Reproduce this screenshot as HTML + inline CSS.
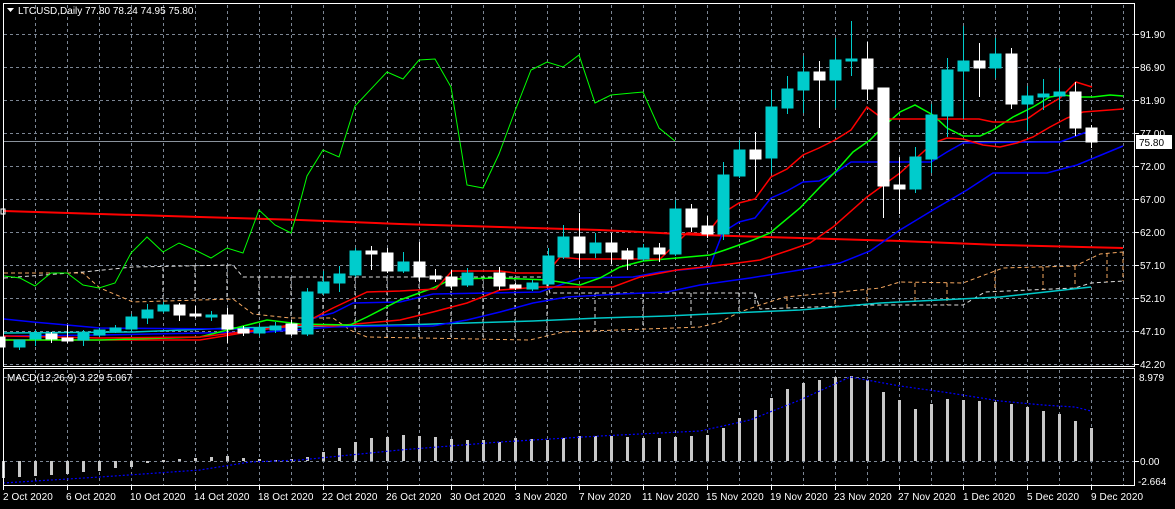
<!DOCTYPE html>
<html><head><meta charset="utf-8"><style>
html,body{margin:0;padding:0;background:#000;width:1175px;height:509px;overflow:hidden}
svg{display:block}
text{font-family:"Liberation Sans",sans-serif;font-size:10px;fill:#fff}
.d text{letter-spacing:0.1px}
</style></head><body>
<svg width="1175" height="509" viewBox="0 0 1175 509" xmlns="http://www.w3.org/2000/svg">
<rect width="1175" height="509" fill="#000"/>
<g stroke="#7c8694" stroke-width="1" stroke-dasharray="3,3" shape-rendering="crispEdges">
<path d="M4 34.5H1134M4 67.5H1134M4 100.5H1134M4 133.5H1134M4 166.5H1134M4 199.5H1134M4 232.5H1134M4 265.5H1134M4 298.5H1134M4 331.5H1134M4 364.5H1134M4 377.5H1134M4 461.5H1134"/>
<path d="M35.5 5V366M67.5 5V366M99.5 5V366M131.5 5V366M163.5 5V366M195.5 5V366M227.5 5V366M259.5 5V366M291.5 5V366M323.5 5V366M355.5 5V366M387.5 5V366M419.5 5V366M451.5 5V366M483.5 5V366M515.5 5V366M547.5 5V366M579.5 5V366M611.5 5V366M643.5 5V366M675.5 5V366M707.5 5V366M739.5 5V366M771.5 5V366M803.5 5V366M835.5 5V366M867.5 5V366M899.5 5V366M931.5 5V366M963.5 5V366M995.5 5V366M1027.5 5V366M1059.5 5V366M1091.5 5V366M1123.5 5V366"/>
<path d="M35.5 370V485M67.5 370V485M99.5 370V485M131.5 370V485M163.5 370V485M195.5 370V485M227.5 370V485M259.5 370V485M291.5 370V485M323.5 370V485M355.5 370V485M387.5 370V485M419.5 370V485M451.5 370V485M483.5 370V485M515.5 370V485M547.5 370V485M579.5 370V485M611.5 370V485M643.5 370V485M675.5 370V485M707.5 370V485M739.5 370V485M771.5 370V485M803.5 370V485M835.5 370V485M867.5 370V485M899.5 370V485M931.5 370V485M963.5 370V485M995.5 370V485M1027.5 370V485M1059.5 370V485M1091.5 370V485M1123.5 370V485"/>
</g>
<g fill="none" stroke-width="1" stroke-dasharray="4,3">
<polyline stroke="#ddd" points="4,278 83,272 133,267 233,265 243,277 545,277 550,293 755,293 760,309 870,305 963,305 985,292 1075,288 1091,283 1123,281"/>
<polyline stroke="#f5a860" points="4,273 83,273 100,288 133,302 233,299 253,314 290,318 333,318 350,330 367,337 530,340 563,332 700,327 720,322 740,312 760,305 785,297 830,293 880,288 900,282 963,283 1003,268 1075,266 1100,254 1123,252"/>
<path stroke="#ddd" d="M163 267V300M195 266V300M227 265V300M259 277V315M291 277V318M323 277V318M355 277V332M387 277V337M419 277V340M451 277V340M483 277V340M515 277V340M547 277V336M595 293V331M643 293V329M691 293V327M739 293V312M755 293V306"/>
<path stroke="#f5a860" d="M787 297V308M835 293V307M867 290V305M915 283V305M947 283V305M995 270V292M1043 267V290M1075 266V288M1107 253V282M1123 252V281"/>
</g>
<polyline fill="none" stroke="#f00" stroke-width="2" points="4,211 100,214 200,217 300,220 400,224 500,227 600,230 700,235 800,238 900,241 1000,245 1123,248"/>
<polyline fill="none" stroke="#0f0" stroke-width="1" points="4,276 20,278 35,286 51,273 67,273 83,285 99,288 115,283 131,253 147,237 163,252 179,243 195,250 211,258 227,248 243,253 259,210 275,225 291,233 298,210 307,176 323,150 339,157 355,106 387,72 403,79 419,60 435,59 451,87 467,185 483,188 499,154 515,111 531,70 547,62 563,67 579,55 595,103 611,95 643,92 659,128 675,141"/>
<line x1="4" y1="141.5" x2="1134" y2="141.5" stroke="#8a929c" stroke-width="1"/>
<g fill="none" stroke-width="1.5">
<polyline stroke="#00c8c8" points="4,333 133,332 233,328 333,326 400,325 467,323 533,321 600,318 667,316 730,313 800,310 880,303 1000,297 1091,287"/>
<polyline stroke="#00f" points="4,336 100,335 200,333 267,332 333,327 400,326 433,326 467,320 500,312 533,303 567,297 620,294 667,292 700,285 750,278 800,270 840,263 870,251 900,230 933,210 967,190 993,173 1047,173 1077,165 1123,146"/>
<polyline stroke="#00f" points="4,319 33,322 67,325 100,328 233,329 290,329 317,317 333,313 353,303 400,302 433,294 540,292 560,285 580,278 633,277 660,272 710,267 716,250 723,232 739,222 755,218 771,198 787,191 803,182 819,181 835,173 851,162 931,162 947,152 963,143 1038,142 1060,142 1092,130"/>
<polyline stroke="#f00" points="4,340 200,340 290,325 333,326 400,320 433,312 467,303 500,290 540,287 613,287 640,277 677,270 730,264 760,260 790,250 810,243 833,227 867,197 900,173 933,143 947,138 963,139 983,145 1000,147 1017,143 1033,137 1050,127 1067,118 1083,112 1123,109"/>
<polyline stroke="#0f0" points="4,340 100,340 200,337 267,320 300,324 350,325 367,317 400,300 433,288 452,279 500,278 547,280 580,285 600,278 620,267 643,261 677,258 710,255 725,250 753,240 770,233 800,208 820,187 837,170 853,152 870,140 883,127 900,112 915,105 933,115 947,128 963,136 980,136 993,130 1013,117 1033,107 1050,97 1063,95 1080,97 1093,97 1110,95 1123,96"/>
<polyline stroke="#f00" points="4,336 100,338 200,337 300,325 333,308 367,292 400,291 436,289 452,271 500,271 515,273 547,273 560,257 580,259 660,259 687,233 707,234 723,213 739,203 755,199 771,177 787,169 803,155 819,148 835,140 851,130 867,107 883,119 979,119 993,122 1013,122 1027,119 1043,108 1060,98 1076,82 1092,87"/>
</g>
<g stroke-width="1" shape-rendering="crispEdges">
<g stroke="#00cccc" fill="#00cccc">
<path d="M19.5 340V350M35.5 330V346M83.5 330V346M99.5 328V337M115.5 325V333M131.5 314V331M147.5 304V324M163.5 302V313M211.5 311V321M259.5 325V336M275.5 322V333M307.5 288V336M323.5 271V295M339.5 266V292M355.5 248V277M403.5 252V273M467.5 268V287M532.5 280V291M548.5 248V286M563.5 225V259M595.5 233V258M643.5 244V261M675.5 200V256M723.5 162V240M739.5 140V178M771.5 90V173M787.5 76V114M803.5 56V113M835.5 38V108M851.5 21V76M915.5 147V193M931.5 104V173M947.5 58V137M963.5 26V119M995.5 38V78M1027.5 86V131M1043.5 79V110M1059.5 68V110"/>
<rect x="14" y="340" width="11" height="7"/><rect x="30" y="334" width="11" height="5"/><rect x="78" y="333" width="11" height="7"/><rect x="94" y="330" width="11" height="5"/><rect x="110" y="328" width="11" height="3"/><rect x="126" y="317" width="11" height="12"/><rect x="142" y="310" width="11" height="8"/><rect x="158" y="305" width="11" height="6"/><rect x="206" y="315" width="11" height="2"/><rect x="254" y="328" width="11" height="5"/><rect x="270" y="326" width="11" height="4"/><rect x="302" y="292" width="11" height="42"/><rect x="318" y="282" width="11" height="11"/><rect x="334" y="274" width="11" height="9"/><rect x="350" y="251" width="11" height="24"/><rect x="398" y="262" width="11" height="9"/><rect x="462" y="273" width="11" height="12"/><rect x="527" y="283" width="11" height="6"/><rect x="543" y="256" width="11" height="28"/><rect x="558" y="237" width="11" height="20"/><rect x="590" y="243" width="11" height="10"/><rect x="638" y="248" width="11" height="11"/><rect x="670" y="209" width="11" height="45"/><rect x="718" y="175" width="11" height="59"/><rect x="734" y="150" width="11" height="26"/><rect x="766" y="107" width="11" height="51"/><rect x="782" y="89" width="11" height="19"/><rect x="798" y="72" width="11" height="18"/><rect x="830" y="60" width="11" height="20"/><rect x="846" y="59" width="11" height="2"/><rect x="910" y="157" width="11" height="32"/><rect x="926" y="115" width="11" height="44"/><rect x="942" y="70" width="11" height="46"/><rect x="958" y="61" width="11" height="10"/><rect x="990" y="54" width="11" height="14"/><rect x="1022" y="96" width="11" height="8"/><rect x="1038" y="94" width="11" height="3"/><rect x="1054" y="92" width="11" height="4"/>
</g>
<g stroke="#fff" fill="#fff">
<path d="M51.5 332V343M67.5 325V343M179.5 303V321M195.5 306V318M227.5 308V343M243.5 326V336M291.5 320V336M371.5 246V270M387.5 248V273M419.5 242V282M435.5 269V282M451.5 270V290M499.5 267V290M515.5 283V290M579.5 213V268M611.5 233V264M627.5 248V270M659.5 243V262M691.5 204V232M707.5 216V238M755.5 132V192M819.5 61V128M867.5 42V100M883.5 88V218M899.5 157V214M979.5 43V97M1011.5 48V109M1075.5 82V136M1091.5 125V148"/>
<rect x="46" y="334" width="11" height="5"/><rect x="62" y="338" width="11" height="3"/><rect x="174" y="305" width="11" height="10"/><rect x="190" y="314" width="11" height="2"/><rect x="222" y="315" width="11" height="14"/><rect x="238" y="329" width="11" height="4"/><rect x="286" y="324" width="11" height="10"/><rect x="366" y="251" width="11" height="3"/><rect x="382" y="253" width="11" height="18"/><rect x="414" y="262" width="11" height="15"/><rect x="430" y="276" width="11" height="3"/><rect x="446" y="277" width="11" height="9"/><rect x="494" y="273" width="11" height="13"/><rect x="510" y="285" width="11" height="3"/><rect x="574" y="237" width="11" height="16"/><rect x="606" y="243" width="11" height="9"/><rect x="622" y="251" width="11" height="8"/><rect x="654" y="248" width="11" height="6"/><rect x="686" y="209" width="11" height="18"/><rect x="702" y="226" width="11" height="8"/><rect x="750" y="150" width="11" height="9"/><rect x="814" y="72" width="11" height="8"/><rect x="862" y="59" width="11" height="30"/><rect x="878" y="88" width="11" height="98"/><rect x="894" y="185" width="11" height="4"/><rect x="974" y="61" width="11" height="7"/><rect x="1006" y="54" width="11" height="50"/><rect x="1070" y="92" width="11" height="36"/><rect x="1086" y="128" width="11" height="14"/>
<rect x="0" y="337" width="5" height="10"/>
</g>
</g>
<g stroke="#c8c8c8" stroke-width="3" shape-rendering="crispEdges">
<path d="M3.5 461V478M19.5 461V477M35.5 461V476M51.5 461V475M67.5 461V474M83.5 461V472M99.5 461V471M115.5 461V468M131.5 461V467M147.5 461V463M163.5 460V462M179.5 459V461M195.5 458V461M211.5 457V461M227.5 456V461M243.5 458V461M259.5 459V461M275.5 460V461M291.5 459V461M307.5 457V461M323.5 452V461M339.5 448V461M355.5 442V461M371.5 438V461M387.5 437V461M403.5 435V461M419.5 436V461M435.5 437V461M451.5 439V461M467.5 440V461M483.5 440V461M499.5 442V461M515.5 438V461M531.5 439V461M547.5 440V461M563.5 438V461M579.5 436V461M595.5 436V461M611.5 436V461M627.5 437V461M643.5 438V461M659.5 438V461M675.5 437V461M691.5 436V461M707.5 435V461M723.5 428V461M739.5 418V461M755.5 410V461M771.5 398V461M787.5 389V461M803.5 383V461M819.5 380V461M835.5 377V461M851.5 376V461M867.5 380V461M883.5 392V461M899.5 400V461M915.5 409V461M931.5 404V461M947.5 399V461M963.5 400V461M979.5 401V461M995.5 402V461M1011.5 404V461M1027.5 407V461M1043.5 411V461M1059.5 414V461M1075.5 421V461M1091.5 428V461"/>
</g>
<polyline fill="none" stroke="#0000ff" stroke-width="1.2" stroke-dasharray="2,2" points="3,483 100,477 200,470 250,462 300,460 350,455 400,450 450,446 500,442 600,436 700,431 750,420 800,400 850,377 900,386 950,393 1000,401 1043,405 1075,407 1091,411"/>
<g fill="none" stroke="#fff" stroke-width="1" shape-rendering="crispEdges">
<rect x="3.5" y="3.5" width="1131" height="363"/>
<rect x="3.5" y="368.5" width="1131" height="117"/>
</g>
<g stroke="#fff" shape-rendering="crispEdges">
<path d="M3.5 486V490M67.5 486V490M131.5 486V490M195.5 486V490M259.5 486V490M323.5 486V490M387.5 486V490M451.5 486V490M515.5 486V490M579.5 486V490M643.5 486V490M707.5 486V490M771.5 486V490M835.5 486V490M899.5 486V490M963.5 486V490M1027.5 486V490M1091.5 486V490"/>
<path d="M1135 34.5H1139M1135 67.5H1139M1135 100.5H1139M1135 133.5H1139M1135 166.5H1139M1135 199.5H1139M1135 232.5H1139M1135 265.5H1139M1135 298.5H1139M1135 331.5H1139M1135 364.5H1139M1135 461.5H1139"/>
</g>
<rect x="1" y="209" width="4" height="5" fill="none" stroke="#fff" stroke-width="1"/>
<path d="M7 8H14L10.5 12Z" fill="#fff"/>
<text x="18" y="14">LTCUSD,Daily  77.80 78.24 74.95 75.80</text>
<text x="7" y="381">MACD(12,26,9) 3.229 5.067</text>
<g>
<text x="1140" y="38">91.90</text><text x="1140" y="71">86.90</text><text x="1140" y="104">81.90</text><text x="1140" y="137">77.00</text><text x="1140" y="170">72.00</text><text x="1140" y="203">67.00</text><text x="1140" y="236">62.00</text><text x="1140" y="269">57.10</text><text x="1140" y="302">52.10</text><text x="1140" y="335">47.10</text><text x="1140" y="368">42.20</text>
<text x="1139" y="381">8.979</text><text x="1140" y="465">0.00</text><text x="1138" y="485">-2.664</text>
</g>
<rect x="1136" y="135" width="36" height="14" fill="#fff"/>
<text x="1139" y="146" style="fill:#000">75.80</text>
<g class="d">
<text x="3" y="500">2 Oct 2020</text><text x="66" y="500">6 Oct 2020</text><text x="130" y="500">10 Oct 2020</text><text x="194" y="500">14 Oct 2020</text><text x="258" y="500">18 Oct 2020</text><text x="322" y="500">22 Oct 2020</text><text x="386" y="500">26 Oct 2020</text><text x="450" y="500">30 Oct 2020</text><text x="515" y="500">3 Nov 2020</text><text x="579" y="500">7 Nov 2020</text><text x="642" y="500">11 Nov 2020</text><text x="706" y="500">15 Nov 2020</text><text x="770" y="500">19 Nov 2020</text><text x="834" y="500">23 Nov 2020</text><text x="898" y="500">27 Nov 2020</text><text x="963" y="500">1 Dec 2020</text><text x="1027" y="500">5 Dec 2020</text><text x="1091" y="500">9 Dec 2020</text>
</g>
</svg>
</body></html>
